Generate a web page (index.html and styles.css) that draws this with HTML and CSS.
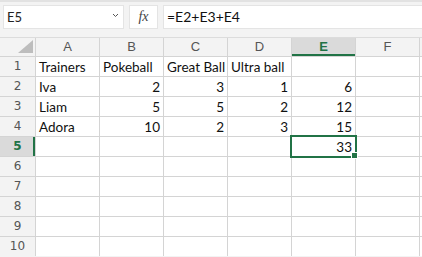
FILE: index.html
```html
<!DOCTYPE html>
<html lang="en">
<head>
    <meta charset="UTF-8">
    <meta name="viewport" content="width=device-width, initial-scale=1.0">
    <title>Trainers</title>
    <link rel="stylesheet" href="styles.css">
</head>
<body>
    <div class="formula-bar">
        <div class="name-box">
            <span>E5</span>
            <svg class="chevron" width="7" height="5" viewBox="0 0 7 5"><path d="M1 1 L3.5 3.5 L6 1" fill="none" stroke="#555" stroke-width="1"/></svg>
        </div>
        <div class="fx-box"><i>fx</i></div>
        <div class="formula-input">=E2+E3+E4</div>
    </div>

    <div class="sheet">
        <div class="hd corner"><svg width="35" height="18" viewBox="0 0 35 18"><polygon points="18,15 33,15 33,2" fill="#bdbdbd"/></svg></div>
        <div class="hd">A</div>
        <div class="hd">B</div>
        <div class="hd">C</div>
        <div class="hd">D</div>
        <div class="hd sel-col">E</div>
        <div class="hd">F</div>
        <div class="hd"></div>

        <div class="rh">1</div>
        <div class="c">Trainers</div>
        <div class="c">Pokeball</div>
        <div class="c">Great Ball</div>
        <div class="c">Ultra ball</div>
        <div class="c"></div>
        <div class="c"></div>
        <div class="c"></div>

        <div class="rh">2</div>
        <div class="c">Iva</div>
        <div class="c num">2</div>
        <div class="c num">3</div>
        <div class="c num">1</div>
        <div class="c num">6</div>
        <div class="c"></div>
        <div class="c"></div>

        <div class="rh">3</div>
        <div class="c">Liam</div>
        <div class="c num">5</div>
        <div class="c num">5</div>
        <div class="c num">2</div>
        <div class="c num">12</div>
        <div class="c"></div>
        <div class="c"></div>

        <div class="rh">4</div>
        <div class="c">Adora</div>
        <div class="c num">10</div>
        <div class="c num">2</div>
        <div class="c num">3</div>
        <div class="c num">15</div>
        <div class="c"></div>
        <div class="c"></div>

        <div class="rh sel-row">5</div>
        <div class="c"></div>
        <div class="c"></div>
        <div class="c"></div>
        <div class="c"></div>
        <div class="c num active">33</div>
        <div class="c"></div>
        <div class="c"></div>

        <div class="rh">6</div>
        <div class="c"></div><div class="c"></div><div class="c"></div><div class="c"></div><div class="c"></div><div class="c"></div><div class="c"></div>
        <div class="rh">7</div>
        <div class="c"></div><div class="c"></div><div class="c"></div><div class="c"></div><div class="c"></div><div class="c"></div><div class="c"></div>
        <div class="rh">8</div>
        <div class="c"></div><div class="c"></div><div class="c"></div><div class="c"></div><div class="c"></div><div class="c"></div><div class="c"></div>
        <div class="rh">9</div>
        <div class="c"></div><div class="c"></div><div class="c"></div><div class="c"></div><div class="c"></div><div class="c"></div><div class="c"></div>
        <div class="rh">10</div>
        <div class="c"></div><div class="c"></div><div class="c"></div><div class="c"></div><div class="c"></div><div class="c"></div><div class="c"></div>
    </div>
</body>
</html>
```

FILE: styles.css
```css
body {
    margin: 0;
    width: 422px;
    height: 257px;
    overflow: hidden;
    background-color: #f3f3f3;
    font-family: Lato, "Liberation Sans", sans-serif;
}

.formula-bar {
    display: flex;
    gap: 5px;
    height: 24px;
    padding: 5px 0 8px 3px;
    box-shadow: inset 0 2px 0 #e2e2e2;
}

.name-box,
.fx-box,
.formula-input {
    background-color: white;
    border: 1px solid #e4e4e4;
    box-sizing: border-box;
    height: 24px;
}

.name-box {
    width: 121px;
    display: flex;
    align-items: center;
    justify-content: space-between;
    padding: 0 4px 0 3px;
    font-size: 13px;
    color: #222;
}

.chevron {
    margin-top: -3px;
}

.fx-box {
    width: 29px;
    display: flex;
    align-items: center;
    justify-content: center;
    font-family: "Liberation Serif", serif;
    font-size: 14px;
    color: #444;
}

.formula-input {
    flex: 1;
    border-right: none;
    padding: 0 3px;
    font-size: 14px;
    line-height: 22px;
    color: #111;
}

.sheet {
    display: grid;
    grid-template-columns: 35px repeat(6, 63px) 1fr;
    grid-template-rows: 18px;
    grid-auto-rows: 19px;
    gap: 1px;
    background-color: #d4d4d4;
    border-top: 1px solid #dcdcdc;
}

.hd {
    background-color: #f3f3f3;
    color: #555;
    font-family: "Liberation Sans", sans-serif;
    font-size: 13px;
    line-height: 18px;
    text-align: center;
}

.corner svg {
    display: block;
}

.hd.sel-col {
    background-color: #dadada;
    color: #217346;
    font-weight: bold;
    box-shadow: inset 0 -2px 0 #217346;
}

.rh {
    background-color: #f3f3f3;
    color: #555;
    font-family: "DejaVu Sans", sans-serif;
    font-size: 12px;
    line-height: 19px;
    text-align: center;
}

.rh.sel-row {
    background-color: #dadada;
    color: #217346;
    font-weight: bold;
    box-shadow: inset -2px 0 0 #217346;
}

.c {
    background-color: white;
    color: #111;
    font-size: 13.5px;
    line-height: 18px;
    padding: 1px 3px 0;
    white-space: nowrap;
}

.num {
    text-align: right;
}

.active {
    position: relative;
}

.active::after {
    content: "";
    position: absolute;
    top: -2px;
    left: -2px;
    right: -2px;
    bottom: -2px;
    border: 2px solid #217346;
}

.active::before {
    content: "";
    position: absolute;
    right: -3px;
    bottom: -3px;
    width: 5px;
    height: 5px;
    background-color: #217346;
    border: 1px solid white;
    z-index: 1;
}
```
